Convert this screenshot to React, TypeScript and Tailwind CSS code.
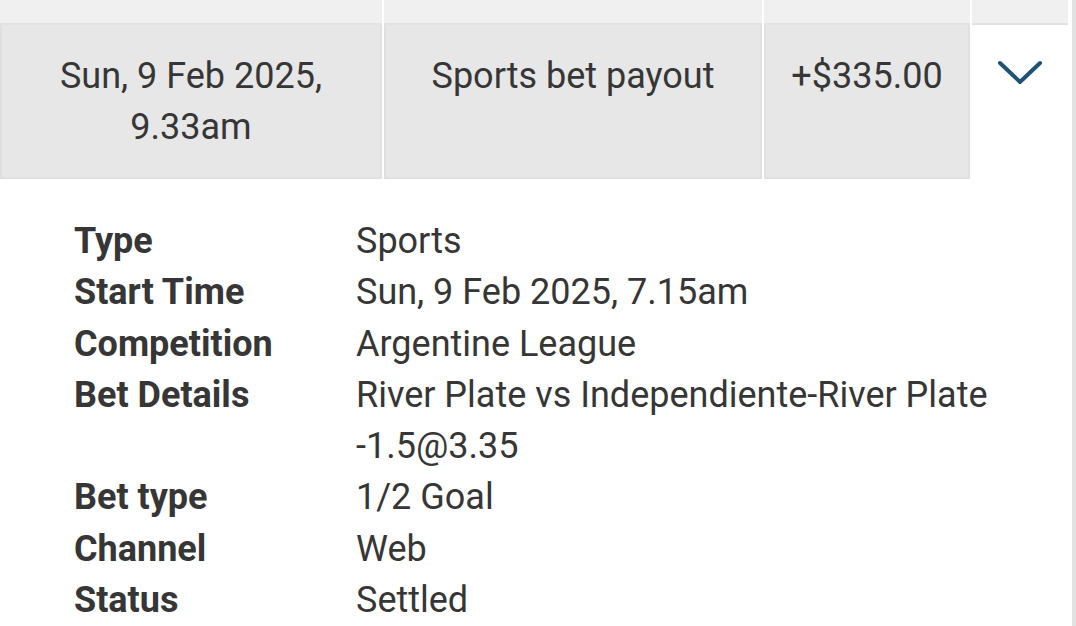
const details: { label: string; value: string }[] = [
  { label: "Type", value: "Sports" },
  { label: "Start Time", value: "Sun, 9 Feb 2025, 7.15am" },
  { label: "Competition", value: "Argentine League" },
  { label: "Bet Details", value: "River Plate vs Independiente-River Plate -1.5@3.35" },
  { label: "Bet type", value: "1/2 Goal" },
  { label: "Channel", value: "Web" },
  { label: "Status", value: "Settled" },
];

function Chevron() {
  return (
    <svg width="46" height="26" viewBox="0 0 46 26" fill="none">
      <path
        d="M3 4 L23 23 L43 4"
        stroke="#1f5275"
        strokeWidth="4"
        strokeLinecap="round"
        strokeLinejoin="round"
      />
    </svg>
  );
}

function App() {
  return (
    <div className="h-[626px] w-[1076px] overflow-hidden bg-white border-r-4 border-[#e2e2e2] font-['Roboto',sans-serif] text-[#363636]">
      {/* previous row, cut off */}
      <div className="grid grid-cols-[382px_378px_206px_96px] gap-x-[2px] pr-[4px]">
        <div className="h-[25px] bg-[#f0f0f0] border-b-2 border-[#e2e2e2]" />
        <div className="h-[25px] bg-[#f0f0f0] border-b-2 border-[#e2e2e2]" />
        <div className="h-[25px] bg-[#f0f0f0] border-b-2 border-[#e2e2e2]" />
        <div className="h-[25px] bg-[#f0f0f0] border-b-2 border-[#e2e2e2]" />
      </div>

      {/* expanded row */}
      <div className="grid grid-cols-[382px_378px_206px_96px] gap-x-[2px] pr-[4px] text-[36px] leading-[51px]">
        <div className="h-[154px] bg-[#e7e7e7] border-2 border-t-0 border-[#e0e0e0] pt-[26px] text-center">
          Sun, 9 Feb 2025,
          <br />
          9.33am
        </div>
        <div className="h-[154px] bg-[#e7e7e7] border-2 border-t-0 border-[#e0e0e0] pt-[26px] text-center">
          Sports bet payout
        </div>
        <div className="h-[154px] bg-[#e7e7e7] border-2 border-t-0 border-[#e0e0e0] pt-[26px] text-center">
          +$335.00
        </div>
        <div className="h-[154px] flex justify-center items-start pt-[34px]">
          <Chevron />
        </div>
      </div>

      {/* details */}
      <div className="pt-[37px] pl-[74px] pr-[60px] text-[36px] leading-[51.3px]">
        {details.map((d) => (
          <div key={d.label} className="flex">
            <div className="w-[282px] shrink-0 font-bold">{d.label}</div>
            <div className="flex-1">{d.value}</div>
          </div>
        ))}
      </div>
    </div>
  );
}

export default App;
